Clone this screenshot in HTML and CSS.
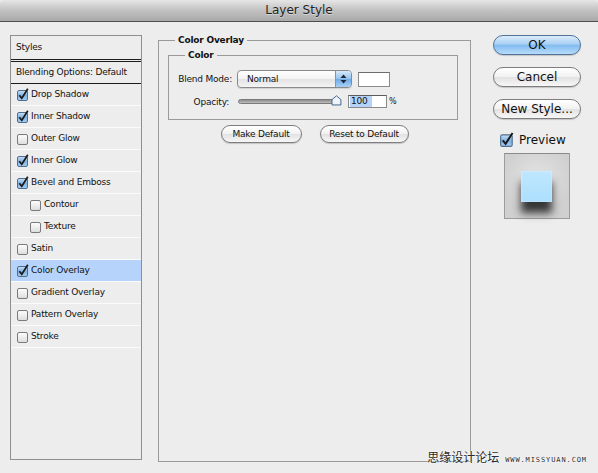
FILE: index.html
```html
<!DOCTYPE html>
<html>
<head>
<meta charset="utf-8">
<link rel="stylesheet" href="styles.css">
</head>
<body>
<div class="window">
  <div class="titlebar">Layer Style</div>
  <div class="main">
    <div class="styles-list">
      <div class="row header">Styles</div>
      <div class="row blending">Blending Options: Default</div>
      <div class="row"><span class="cb on"></span>Drop Shadow</div>
      <div class="row"><span class="cb on"></span>Inner Shadow</div>
      <div class="row"><span class="cb"></span>Outer Glow</div>
      <div class="row"><span class="cb on"></span>Inner Glow</div>
      <div class="row"><span class="cb on"></span>Bevel and Emboss</div>
      <div class="row sub"><span class="cb"></span>Contour</div>
      <div class="row sub"><span class="cb"></span>Texture</div>
      <div class="row"><span class="cb"></span>Satin</div>
      <div class="row selected"><span class="cb on"></span>Color Overlay</div>
      <div class="row"><span class="cb"></span>Gradient Overlay</div>
      <div class="row"><span class="cb"></span>Pattern Overlay</div>
      <div class="row"><span class="cb"></span>Stroke</div>
    </div>

    <div class="group outer">
      <div class="group-title">Color Overlay</div>
      <div class="group inner">
        <div class="group-title">Color</div>
        <div class="field-row first">
          <span class="label">Blend Mode:</span>
          <div class="popup">
            <span class="popup-text">Normal</span>
            <span class="popup-arrows">
              <svg width="7" height="10" viewBox="0 0 7 10"><path d="M3.5 0.5 L6.5 4 L0.5 4 Z M0.5 6 L6.5 6 L3.5 9.5 Z" fill="#1c2a3a"/></svg>
            </span>
          </div>
          <span class="swatch"></span>
        </div>
        <div class="field-row second">
          <span class="label op">Opacity:</span>
          <div class="slider">
            <span class="track"></span>
            <svg class="thumb" width="11" height="11" viewBox="0 0 11 11"><path d="M5.5 0.8 L10 4.6 L10 10 L1 10 L1 4.6 Z" fill="#eef4fb" stroke="#43648c" stroke-width="1"/></svg>
          </div>
          <span class="num"><span class="sel">100</span></span>
          <span class="pct">%</span>
        </div>
      </div>
      <div class="btn-row">
        <span class="pill small w1">Make Default</span>
        <span class="pill small w2">Reset to Default</span>
      </div>
    </div>

    <div class="side">
      <span class="pill big ok">OK</span>
      <span class="pill big">Cancel</span>
      <span class="pill big">New Style...</span>
      <div class="preview-row"><span class="cb on large"></span>Preview</div>
      <div class="preview-box"><span class="preview-square"></span></div>
    </div>
  </div>
  <div class="watermark"><span class="wm-cn">思缘设计论坛</span><span class="wm-en">WWW.MISSYUAN.COM</span></div>
</div>
</body>
</html>
```

FILE: styles.css
```css
* { box-sizing: border-box; }
html, body { margin: 0; padding: 0; }
body {
  width: 598px;
  height: 473px;
  overflow: hidden;
  background: #ededed;
  font-family: "DejaVu Sans", "Liberation Sans", sans-serif;
  color: #111;
}
.window { position: relative; width: 598px; height: 473px; }
.titlebar {
  height: 22px;
  border-bottom: 1px solid #4e4e4e;
  background: linear-gradient(#e6e6e6, #c4c4c4 45%, #a9a9a9);
  border-radius: 4px 4px 0 0;
  text-align: center;
  font-size: 12px;
  line-height: 21px;
  color: #1e1e1e;
  text-shadow: 0 1px 0 rgba(255,255,255,0.45);
}
.main {
  display: flex;
  align-items: flex-start;
  padding: 13px 0 0 10px;
}

/* left list */
.styles-list {
  width: 132px;
  height: 425px;
  border: 1px solid #8f8f8f;
  font-size: 9px;
  letter-spacing: -0.2px;
}
.row {
  height: 22px;
  border-bottom: 1px solid #fbfbfb;
  display: flex;
  align-items: center;
  padding-left: 6px;
  padding-bottom: 1px;
}
.row.header {
  height: 26px;
  padding-left: 5px;
  padding-bottom: 2px;
  border-bottom: 3px double #1c1c1c;
}
.row.blending {
  height: 22px;
  padding-left: 5px;
  border-bottom: 1px solid #1c1c1c;
}
.row.sub { padding-left: 19px; }
.row.selected { background: #b6d4fb; }

.cb {
  width: 12px;
  height: 13px;
  margin-right: 2px;
  flex: none;
  background-repeat: no-repeat;
  background-image: url("data:image/svg+xml;utf8,<svg xmlns='http://www.w3.org/2000/svg' width='12' height='13' viewBox='0 0 12 13'><defs><linearGradient id='g' x1='0' y1='0' x2='0' y2='1'><stop offset='0' stop-color='%23ffffff'/><stop offset='1' stop-color='%23dcdcdc'/></linearGradient></defs><rect x='0.5' y='2.5' width='10' height='10' rx='1.5' fill='url(%23g)' stroke='%237a7a7a'/></svg>");
}
.cb.on {
  background-image: url("data:image/svg+xml;utf8,<svg xmlns='http://www.w3.org/2000/svg' width='12' height='13' viewBox='0 0 12 13'><defs><linearGradient id='g' x1='0' y1='0' x2='0' y2='1'><stop offset='0' stop-color='%23c9e0f5'/><stop offset='0.5' stop-color='%237fb2e3'/><stop offset='1' stop-color='%23a9cdf0'/></linearGradient></defs><rect x='0.5' y='2.5' width='10' height='10' rx='1.5' fill='url(%23g)' stroke='%234f6e8f'/><path d='M2.3 7.2 L4.8 10.3 L10.8 0.8' fill='none' stroke='%231a1a1a' stroke-width='1.7'/></svg>");
}
.cb.large {
  width: 14px;
  height: 15px;
  margin-right: 5px;
  background-size: 14px 15px;
}

/* groups */
.group {
  border: 1px solid #9a9a9a;
}
.group-title {
  width: fit-content;
  margin: -7px 0 0 16px;
  padding: 0 3px;
  background: #ededed;
  font-size: 9px;
  font-weight: bold;
  letter-spacing: -0.2px;
  line-height: 12px;
}
.group.outer {
  width: 313px;
  height: 422px;
  margin: 5px 0 0 16px;
}
.group.inner {
  margin: 9px 12px 0 9px;
  padding-bottom: 11px;
}
.group.inner .group-title { margin-left: 16px; }
.field-row {
  display: flex;
  align-items: center;
  font-size: 9px;
  letter-spacing: -0.2px;
}
.field-row.first { margin-top: 9px; height: 18px; }
.field-row.second { margin-top: 7px; height: 13px; }
.label { width: 63px; text-align: right; flex: none; }
.label.op { padding-right: 3px; }

.popup {
  margin-left: 5px;
  width: 115px;
  height: 18px;
  border: 1px solid #8a8a8a;
  border-radius: 4px;
  background: linear-gradient(#ffffff, #f3f3f3 50%, #e3e3e3 51%, #f4f4f4);
  display: flex;
  align-items: center;
  overflow: hidden;
  box-shadow: 0 1px 1px rgba(0,0,0,0.12);
}
.popup-text { flex: 1; padding-left: 9px; font-size: 9px; }
.popup-arrows {
  width: 16px;
  height: 100%;
  border-left: 1px solid #7c96b4;
  background: linear-gradient(#d7e9fa, #93c2ee 50%, #6eaae6 51%, #a9d0f5);
  display: flex;
  align-items: center;
  justify-content: center;
}
.popup-arrows svg { display: block; }
.swatch {
  margin-left: 6px;
  width: 32px;
  height: 15px;
  background: #ffffff;
  border: 1px solid #8a8a8a;
  border-top-color: #6d6d6d;
}

.slider {
  margin-left: 6px;
  width: 104px;
  height: 13px;
  display: flex;
  align-items: center;
}
.track {
  width: 99px;
  height: 5px;
  border-radius: 3px;
  border: 1px solid #7a7a7a;
  background: linear-gradient(#8d8d8d, #bdbdbd);
}
.thumb { margin-left: -5px; margin-top: -3px; display: block; }
.num {
  margin-left: 6px;
  width: 39px;
  height: 13px;
  background: #fff;
  border: 1px solid #8a8a8a;
  border-top-color: #5c5c5c;
  display: flex;
  align-items: center;
  padding-left: 1px;
  font-size: 9px;
}
.sel { background: #b5d3f8; padding: 0 4px 0 1px; line-height: 11px; }
.pct { margin-left: 2px; font-size: 8px; }

.btn-row {
  margin-top: 5px;
  display: flex;
  justify-content: center;
  gap: 18px;
}
.pill {
  display: flex;
  align-items: center;
  justify-content: center;
  border: 1px solid #7d7d7d;
  border-radius: 10px;
  background: linear-gradient(#ffffff, #f1f1f1 50%, #e1e1e1 51%, #f7f7f7);
  box-shadow: 0 1px 1px rgba(0,0,0,0.18);
  color: #111;
}
.pill.small { height: 18px; font-size: 9px; letter-spacing: -0.2px; }
.pill.w1 { width: 81px; }
.pill.w2 { width: 89px; }

/* right side */
.side {
  margin-left: 22px;
  width: 88px;
  display: flex;
  flex-direction: column;
}
.pill.big {
  height: 20px;
  font-size: 12px;
  margin-bottom: 12px;
}
.pill.ok {
  border-color: #52739a;
  background: linear-gradient(#dcecfb, #a8d0f4 45%, #82bcf0 52%, #b7dcfb);
}
.preview-row {
  margin-top: 1px;
  margin-left: 7px;
  display: flex;
  align-items: center;
  font-size: 12px;
  height: 15px;
}
.preview-box {
  margin: 6px 0 0 11px;
  width: 66px;
  height: 66px;
  border: 1px solid #9c9c9c;
  border-top-color: #8a8a8a;
  background: radial-gradient(circle at 50% 40%, #e4e4e4, #d0d0d0 70%);
  padding: 17px 0 0 16px;
}
.preview-square {
  display: block;
  width: 31px;
  height: 31px;
  background: linear-gradient(#bfe7ff, #acdffd);
  box-shadow: 0 11px 8px rgba(45,45,45,0.95), inset 0 0 2px rgba(255,255,255,0.6);
}

.watermark {
  position: absolute;
  right: 11px;
  bottom: 9px;
  display: flex;
  align-items: baseline;
  color: #2a2a2a;
  text-shadow: 0 0 2px #fff, 0 0 2px #fff;
}
.wm-cn { font-family: "Noto Sans CJK SC", sans-serif; font-size: 12px; line-height: 14px; }
.wm-en { margin-left: 6px; font-family: "DejaVu Sans Mono", monospace; font-size: 7px; letter-spacing: 0.9px; }
```
